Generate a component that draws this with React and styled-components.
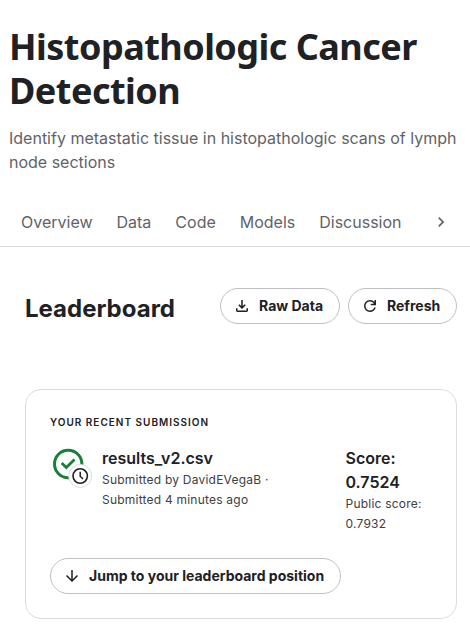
import React from "react";
import styled, { createGlobalStyle } from "styled-components";

const Global = createGlobalStyle`
  * { box-sizing: border-box; }
  body { margin: 0; background: #fff; color: #202124; font-family: Inter, sans-serif; overflow: hidden; }
  h1, h2, p { margin: 0; }
`;
const Page = styled.main`
  width: 470px;
  height: 626px;
  display: flex;
  flex-direction: column;
`;
const Header = styled.header`
  padding: 25px 0 0 9px;
  height: 198px;
`;
const Title = styled.h1`
  font: 700 36px/44px "Noto Sans", sans-serif;
  letter-spacing: -0.52px;
  white-space: nowrap;
`;
const Subtitle = styled.p`
  margin-top: 13px;
  font-size: 16px;
  line-height: 24px;
  color: #5f6368;
  white-space: nowrap;
`;
const Tabs = styled.nav`
  height: 49px;
  display: flex;
  align-items: center;
  gap: 24px;
  padding: 0 19px 0 21px;
  border-bottom: 1px solid #dadce0;
  color: #5f6368;
  font-size: 16px;
  svg { margin-left: auto; }
`;
const Bar = styled.div`
  height: 36px;
  margin: 41px 13px 0 25px;
  display: flex;
  align-items: center;
  gap: 8px;
`;
const Heading = styled.h2`
  font-size: 24px;
  line-height: 32px;
  font-weight: 700;
  margin: 5px auto 0 0;
`;
const Pill = styled.button`
  width: ${(p) => p.$w}px;
  height: 36px;
  display: flex;
  align-items: center;
  gap: 8px;
  padding: 0 0 0 12px;
  border: 1px solid #bdc1c6;
  border-radius: 18px;
  background: #fff;
  color: #202124;
  font: 700 14px/20px Inter, sans-serif;
  white-space: nowrap;
`;
const Card = styled.section`
  margin: 65px 13px 0 25px;
  height: 230px;
  padding: 23px 24px 24px;
  border: 1px solid #dadce0;
  border-radius: 16px;
`;
const Label = styled.p`
  font-size: 10px;
  line-height: 18px;
  font-weight: 600;
  letter-spacing: 1px;
`;
const Row = styled.div`
  display: flex;
  margin-top: 15px;
  height: 112px;
`;
const Status = styled.div`
  width: 52px;
  svg { display: block; }
`;
const File = styled.div`
  width: 243.5px;
`;
const Strong = styled.p`
  font-size: 16px;
  line-height: 24px;
  font-weight: 600;
`;
const Small = styled.p`
  font-size: 12px;
  line-height: 20px;
  color: #3c4043;
  letter-spacing: 0.22px;
`;

const Icon = ({ d, size = 18 }) => (
  <svg width={size} height={size} viewBox="0 0 24 24" fill="currentColor"><path d={d} /></svg>
);
const icons = {
  next: "M10 6 8.59 7.41 13.17 12l-4.58 4.59L10 18l6-6z",
  download: "M12 16l-5-5 1.4-1.45 2.6 2.6V4h2v8.15l2.6-2.6L17 11l-5 5zm-6 4q-.825 0-1.412-.587Q4 18.825 4 18v-3h2v3h12v-3h2v3q0 .825-.587 1.413Q18.825 20 18 20H6z",
  refresh: "M12 20q-3.35 0-5.675-2.325Q4 15.35 4 12q0-3.35 2.325-5.675Q8.65 4 12 4q1.725 0 3.3.712 1.575.713 2.7 2.038V4h2v7h-7V9h4.2q-.8-1.4-2.187-2.2Q13.625 6 12 6 9.5 6 7.75 7.75T6 12q0 2.5 1.75 4.25T12 18q1.925 0 3.475-1.1T17.65 14h2.1q-.7 2.65-2.85 4.325Q14.75 20 12 20z",
  down: "M11 4v12.175l-5.6-5.6L4 12l8 8 8-8-1.4-1.425-5.6 5.6V4z",
};

export default function App() {
  return (
    <Page>
      <Global />
      <Header>
        <Title>Histopathologic Cancer<br />Detection</Title>
        <Subtitle>Identify metastatic tissue in histopathologic scans of lymph<br />node sections</Subtitle>
      </Header>
      <Tabs>
        {["Overview", "Data", "Code", "Models", "Discussion"].map((t) => <span key={t}>{t}</span>)}
        <Icon d={icons.next} size={20} />
      </Tabs>
      <Bar>
        <Heading>Leaderboard</Heading>
        <Pill $w={120}><Icon d={icons.download} />Raw Data</Pill>
        <Pill $w={109}><Icon d={icons.refresh} />Refresh</Pill>
      </Bar>
      <Card>
        <Label>YOUR RECENT SUBMISSION</Label>
        <Row>
          <Status>
            <svg width="44" height="44" viewBox="0 0 44 44" fill="none">
              <circle cx="18.2" cy="18" r="13.7" stroke="#188038" strokeWidth="3" />
              <path d="m11.7 17 4.6 4.6 8.2-8.2" stroke="#188038" strokeWidth="2.8" />
              <circle cx="30.2" cy="30" r="11.5" fill="#fff" stroke="#dadce0" />
              <circle cx="30.2" cy="30" r="7.2" stroke="#202124" strokeWidth="1.6" />
              <path d="M30.2 25.8v4.4l2.8 2.8" stroke="#202124" strokeWidth="1.5" />
            </svg>
          </Status>
          <File>
            <Strong>results_v2.csv</Strong>
            <Small>Submitted by DavidEVegaB ·<br />Submitted 4 minutes ago</Small>
          </File>
          <div>
            <Strong>Score:<br />0.7524</Strong>
            <Small>Public score:<br />0.7932</Small>
          </div>
        </Row>
        <Pill $w={291}><Icon d={icons.down} />Jump to your leaderboard position</Pill>
      </Card>
    </Page>
  );
}
